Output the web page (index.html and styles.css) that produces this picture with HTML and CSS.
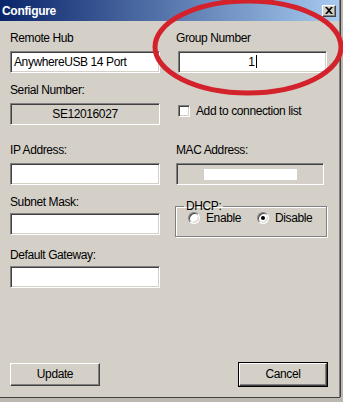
FILE: index.html
```html
<!DOCTYPE html>
<html lang="en">

<head>
  <meta charset="UTF-8" />
  <title>Configure</title>
  <link rel="stylesheet" href="styles.css">
</head>

<body>

  <div class="window">
    <div class="title-bar">
      <span class="title">Configure</span>
      <span class="close-btn">
        <svg width="8" height="7" viewBox="0 0 8 7">
          <path d="M0 0 L2 0 L4 2 L6 0 L8 0 L5 3.5 L8 7 L6 7 L4 5 L2 7 L0 7 L3 3.5 Z" fill="#000" />
        </svg>
      </span>
    </div>

    <div class="dialog-body">
      <div class="form-grid">
        <!-- row 1 -->
        <div class="field">
          <div class="label">Remote Hub</div>
          <div class="textbox">AnywhereUSB 14 Port</div>
        </div>
        <div class="field">
          <div class="label">Group Number</div>
          <div class="textbox textbox-center group-box">1<span class="caret"></span></div>
        </div>

        <!-- row 2 -->
        <div class="field">
          <div class="label">Serial Number:</div>
          <div class="textbox textbox-center readonly">SE12016027</div>
        </div>
        <div class="check-row">
          <span class="checkbox"></span>
          <span>Add to connection list</span>
        </div>

        <!-- row 3 -->
        <div class="field row-ip">
          <div class="label">IP Address:</div>
          <div class="textbox"></div>
        </div>
        <div class="field row-ip">
          <div class="label">MAC Address:</div>
          <div class="textbox readonly mac-box"><span class="mac-value"></span></div>
        </div>

        <!-- row 4 -->
        <div class="field row-subnet">
          <div class="label">Subnet Mask:</div>
          <div class="textbox"></div>
        </div>
        <fieldset class="group-frame row-subnet">
          <legend>DHCP:</legend>
          <label class="radio-item"><span class="radio"></span>Enable</label>
          <label class="radio-item"><span class="radio checked"></span>Disable</label>
        </fieldset>

        <!-- row 5 -->
        <div class="field row-gateway">
          <div class="label">Default Gateway:</div>
          <div class="textbox"></div>
        </div>
      </div>

      <div class="btn-row">
        <span class="btn">Update</span>
        <span class="btn btn-default">Cancel</span>
      </div>
    </div>
  </div>

  <!-- coretan merah di atas screenshot -->
  <svg class="ink-circle" width="343" height="402" viewBox="0 0 343 402">
    <ellipse cx="248" cy="47" rx="93" ry="46" fill="none" stroke="#d3222b" stroke-width="5" />
  </svg>

</body>

</html>
```

FILE: styles.css
```css
body {
  margin: 0;
  width: 343px;
  height: 402px;
  overflow: hidden;
  background: #bcb8b0;
  font-family: 'Liberation Sans', Arial, sans-serif;
  font-size: 12px;
  letter-spacing: -0.4px;
  color: #000;
  position: relative;
}

.window {
  width: 339px;
  height: 397px;
  background: #d4d0c8;
  border-right: 1px solid #808080;
  box-shadow: 1px 0 0 #404040, 0 1px 0 #404040;
  display: flex;
  flex-direction: column;
}

.title-bar {
  height: 21px;
  background: linear-gradient(to right, #0a246a, #a6caf0);
  display: flex;
  align-items: center;
  justify-content: space-between;
  padding: 0 3px 0 2px;
}

.title {
  color: white;
  font-weight: bold;
  font-size: 12px;
  letter-spacing: -0.3px;
}

.close-btn {
  width: 14px;
  height: 12px;
  background: #d4d0c8;
  border-top: 1px solid #fff;
  border-left: 1px solid #fff;
  border-right: 1px solid #404040;
  border-bottom: 1px solid #404040;
  box-shadow: inset -1px -1px 0 #808080;
  display: flex;
  align-items: center;
  justify-content: center;
  box-sizing: border-box;
}

.dialog-body {
  flex: 1;
  padding: 10px 12px 10px 10px;
  display: flex;
  flex-direction: column;
}

.form-grid {
  display: grid;
  grid-template-columns: 150px 151px;
  column-gap: 16px;
  row-gap: 10px;
  align-items: start;
}

.label {
  height: 14px;
  line-height: 14px;
  margin-bottom: 6px;
  white-space: nowrap;
}

.textbox {
  height: 22px;
  box-sizing: border-box;
  background: white;
  border-top: 1px solid #808080;
  border-left: 1px solid #808080;
  border-right: 1px solid #fff;
  border-bottom: 1px solid #fff;
  box-shadow: inset 1px 1px 0 #404040, inset -1px -1px 0 #d4d0c8;
  padding: 0 3px;
  line-height: 20px;
  white-space: nowrap;
  overflow: hidden;
}

.textbox-center {
  text-align: center;
}

.group-box {
  margin-left: 2px;
  width: 149px;
}

.caret {
  display: inline-block;
  width: 1px;
  height: 13px;
  background: #000;
  vertical-align: -2px;
  margin-left: 1px;
}

.readonly {
  background: #d4d0c8;
}

.mac-box {
  display: flex;
  justify-content: center;
  align-items: center;
  width: 148px;
}

.mac-value {
  display: block;
  width: 93px;
  height: 11px;
  background: white;
}

.check-row {
  display: flex;
  align-items: center;
  gap: 6px;
  margin-top: 21px;
  margin-left: 2px;
}

.checkbox {
  width: 12px;
  height: 12px;
  box-sizing: border-box;
  background: white;
  border-top: 1px solid #808080;
  border-left: 1px solid #808080;
  border-right: 1px solid #fff;
  border-bottom: 1px solid #fff;
  box-shadow: inset 1px 1px 0 #404040, inset -1px -1px 0 #d4d0c8;
}

.row-ip {
  margin-top: 8px;
}

.row-subnet .label {
  margin-bottom: 4px;
}

.row-gateway .label {
  margin-bottom: 4px;
}

.row-gateway {
  margin-top: 1px;
}

.group-frame {
  margin: 5px 0 0 -1px;
  padding: 0 0 0 12px;
  height: 37px;
  box-sizing: border-box;
  border: 1px solid #808080;
  box-shadow: 1px 1px 0 #fff, inset 1px 1px 0 #fff;
  display: flex;
  align-items: center;
  gap: 0;
}

.group-frame legend {
  padding: 0 2px;
  margin-left: -4px;
  line-height: 12px;
}

.radio-item {
  display: flex;
  align-items: center;
  gap: 6px;
  width: 69px;
  margin-top: -12px;
}

.radio {
  width: 12px;
  height: 12px;
  border-radius: 50%;
  box-sizing: border-box;
  background: white;
  border: 1px solid;
  border-color: #808080 #fff #fff #808080;
  box-shadow: inset 1px 1px 0 #404040, inset -1px -1px 0 #d4d0c8;
  position: relative;
}

.radio.checked::after {
  content: "";
  position: absolute;
  left: 3px;
  top: 3px;
  width: 4px;
  height: 4px;
  border-radius: 50%;
  background: #000;
}

.btn-row {
  margin-top: auto;
  display: flex;
  justify-content: space-between;
  padding-bottom: 1px;
}

.btn {
  width: 90px;
  height: 23px;
  box-sizing: border-box;
  text-align: center;
  line-height: 20px;
  background: #d4d0c8;
  border-top: 1px solid #fff;
  border-left: 1px solid #fff;
  border-right: 1px solid #404040;
  border-bottom: 1px solid #404040;
  box-shadow: inset -1px -1px 0 #808080;
}

.btn-default {
  width: 88px;
  outline: 1px solid #000;
  outline-offset: 0;
  border-color: #fff #404040 #404040 #fff;
}

.ink-circle {
  position: absolute;
  left: 0;
  top: 0;
  pointer-events: none;
}
```
